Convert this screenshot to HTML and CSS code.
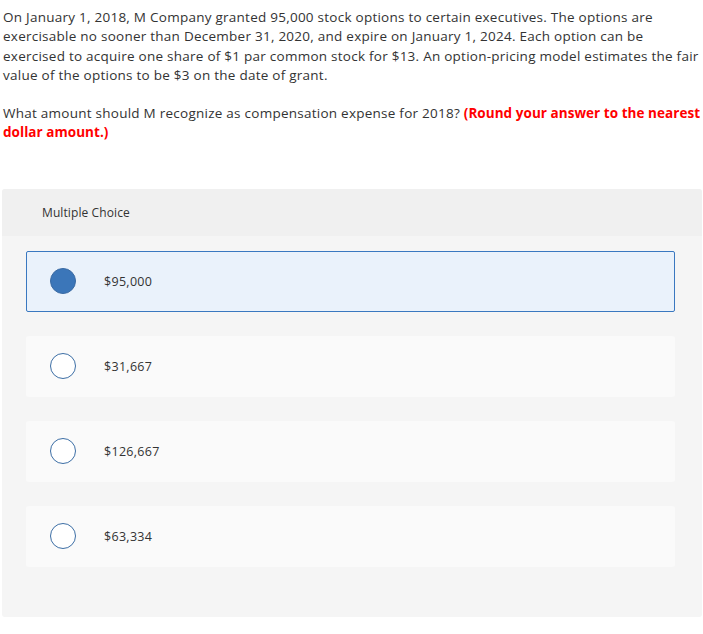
FILE: index.html
```html
<!DOCTYPE html>
<html>
<head>
<meta charset="utf-8">
<link rel="stylesheet" href="styles.css">
</head>
<body>
<div class="question">
  <p>On January 1, 2018, M Company granted 95,000 stock options to certain executives. The options are<br>exercisable no sooner than December 31, 2020, and expire on January 1, 2024. Each option can be<br>exercised to acquire one share of $1 par common stock for $13. An option-pricing model estimates the fair<br>value of the options to be $3 on the date of grant.</p>
  <p>What amount should M recognize as compensation expense for 2018? <strong class="hint">(Round your answer to the nearest<br>dollar amount.)</strong></p>
</div>
<div class="panel">
  <div class="panel-head">Multiple Choice</div>
  <div class="panel-body">
    <div class="choice selected"><span class="radio"></span><span class="label">$95,000</span></div>
    <div class="choice"><span class="radio"></span><span class="label">$31,667</span></div>
    <div class="choice"><span class="radio"></span><span class="label">$126,667</span></div>
    <div class="choice"><span class="radio"></span><span class="label">$63,334</span></div>
  </div>
</div>
</body>
</html>
```
FILE: styles.css
```css
html, body { margin: 0; padding: 0; background: #fff; }
body { font-family: "Open Sans", Lato, sans-serif; color: #333; }
.question { padding: 8px 0 0 3px; font-size: 13.5px; letter-spacing: 0.25px; line-height: 19.3px; white-space: nowrap; }
.question p { margin: 0 0 19px 0; }
.hint { color: #f00; font-weight: 700; letter-spacing: 0.05px; }
.panel { margin: 46px 1px 0 2px; background: #f5f5f5; border-radius: 3px; overflow: hidden; }
.panel-head { background: #f0f0f0; height: 47px; display: flex; align-items: center; padding-left: 40px; font-size: 12px; letter-spacing: 0.1px; color: #333; }
.panel-body { padding: 15px 27px 50px 24px; display: flex; flex-direction: column; gap: 24px; }
.choice { height: 61px; background: #fafafa; border-radius: 3px; display: flex; align-items: center; box-sizing: border-box; border: 1px solid transparent; }
.choice.selected { background: #eaf2fb; border-color: #3a78c0; border-radius: 2px; }
.radio { width: 26px; height: 26px; border: 1.5px solid #3c6ea5; border-radius: 50%; margin-left: 23px; box-sizing: border-box; background: #fff; flex: none; }
.selected .radio { background: #3b76b9; border-color: #3a6aa3; }
.label { margin-left: 28px; font-size: 12.5px; letter-spacing: 0.3px; color: #333; }
```
